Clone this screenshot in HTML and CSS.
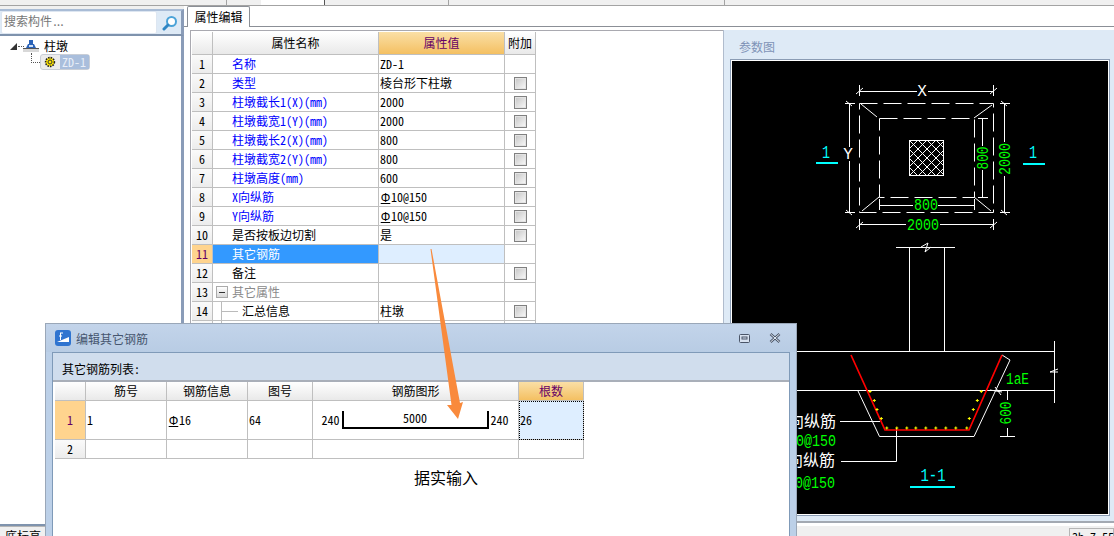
FILE: index.html
```html
<!DOCTYPE html>
<html lang="zh-CN">
<head>
<meta charset="utf-8">
<title>编辑其它钢筋</title>
<link rel="stylesheet" href="styles.css">
</head>
<body>
<div class="page">
  <div class="topstrip"><i class="seg s1"></i><i class="seg s2"></i><i class="seg s3"></i><i class="seg s4"></i><i class="seg s5"></i></div>
  <div class="main">
    <aside class="left">
      <div class="searchbar">
        <div class="searchbox">搜索构件<span class="dots">...</span></div>
        <svg class="searchicon" width="16" height="16" viewBox="0 0 16 16"><circle cx="9.5" cy="6.5" r="4.5" fill="#fff" stroke="#4ba3d8" stroke-width="2"/><path d="M6 10 L2 14" stroke="#2f86c4" stroke-width="3" stroke-linecap="round"/></svg>
      </div>
      <div class="tree">
        <div class="node root">
          <svg class="twist" width="7" height="7" viewBox="0 0 7 7"><path d="M0 7 L7 7 L7 0 Z" fill="#333"/></svg>
          <i class="hdots"></i>
          <svg class="colicon" width="16" height="13" viewBox="0 0 16 13"><rect x="6" y="0" width="4" height="4" fill="#2a62b8"/><path d="M3 8 L5 4 H11 L13 8 Z" fill="#2a62b8"/><rect x="6" y="5" width="4" height="2" fill="#cfe0f5"/><rect x="0" y="8" width="16" height="1" fill="#555"/><rect x="0" y="9" width="16" height="3" fill="#d8d8d8"/></svg>
          <span>柱墩</span>
        </div>
        <div class="node leaf">
          <i class="elbow"></i>
          <div class="chip">
            <svg class="gear" width="12" height="12" viewBox="0 0 12 12"><circle cx="6" cy="6" r="4.4" fill="#ffe600" stroke="#222" stroke-width="1.6" stroke-dasharray="1.6 1"/><circle cx="6" cy="6" r="2" fill="#ffe600" stroke="#333" stroke-width="1"/></svg>
            <span class="chiplabel">ZD-1</span>
          </div>
        </div>
      </div>
    </aside>
    <section class="right">
      <div class="tabs"><div class="tab">属性编辑</div></div>
      <div class="rightbody">
        <div class="props">
          <table class="grid proptable">
            <colgroup><col class="c1"><col class="c2"><col class="c3"><col class="c4"></colgroup>
            <thead><tr class="headrow"><th></th><th>属性名称</th><th class="hot">属性值</th><th>附加</th></tr></thead>
            <tbody>
              <tr><td class="rh">1</td><td class="nm blue">名称</td><td class="val">ZD-1</td><td></td></tr>
              <tr><td class="rh">2</td><td class="nm blue">类型</td><td class="val">棱台形下柱墩</td><td class="ck"><i class="box"></i></td></tr>
              <tr><td class="rh">3</td><td class="nm blue">柱墩截长1(X)(mm)</td><td class="val">2000</td><td class="ck"><i class="box"></i></td></tr>
              <tr><td class="rh">4</td><td class="nm blue">柱墩截宽1(Y)(mm)</td><td class="val">2000</td><td class="ck"><i class="box"></i></td></tr>
              <tr><td class="rh">5</td><td class="nm blue">柱墩截长2(X)(mm)</td><td class="val">800</td><td class="ck"><i class="box"></i></td></tr>
              <tr><td class="rh">6</td><td class="nm blue">柱墩截宽2(Y)(mm)</td><td class="val">800</td><td class="ck"><i class="box"></i></td></tr>
              <tr><td class="rh">7</td><td class="nm blue">柱墩高度(mm)</td><td class="val">600</td><td class="ck"><i class="box"></i></td></tr>
              <tr><td class="rh">8</td><td class="nm blue">X向纵筋</td><td class="val"><span class="bar">Φ</span>10@150</td><td class="ck"><i class="box"></i></td></tr>
              <tr><td class="rh">9</td><td class="nm blue">Y向纵筋</td><td class="val"><span class="bar">Φ</span>10@150</td><td class="ck"><i class="box"></i></td></tr>
              <tr><td class="rh">10</td><td class="nm">是否按板边切割</td><td class="val">是</td><td class="ck"><i class="box"></i></td></tr>
              <tr class="sel"><td class="rh">11</td><td class="nm">其它钢筋</td><td class="val"></td><td></td></tr>
              <tr><td class="rh">12</td><td class="nm">备注</td><td class="val"></td><td class="ck"><i class="box"></i></td></tr>
              <tr><td class="rh">13</td><td class="nm group"><i class="minus"></i>其它属性</td><td class="val"></td><td></td></tr>
              <tr><td class="rh">14</td><td class="nm sub"><i class="branch"></i>汇总信息</td><td class="val">柱墩</td><td class="ck"><i class="box"></i></td></tr>
              <tr><td class="rh">15</td><td class="nm sub"></td><td class="val"></td><td></td></tr>
            </tbody>
          </table>
        </div>
        <div class="params">
          <div class="paramtitle">参数图</div>
          <div class="canvasframe">
            <svg class="drawing" width="376" height="453" viewBox="732 61 376 453">
              <defs>
                <pattern id="hatch" width="9" height="9" patternUnits="userSpaceOnUse" patternTransform="translate(909 140)">
                  <path d="M0 0 L9 9 M9 0 L0 9" stroke="#fff" stroke-width="1"/>
                </pattern>
              </defs>
              <g class="w">
                <path class="dash" d="M859.5 103.5 H993.5 V212.5 H859.5 Z"/>
                <path class="dash" d="M879.5 118.5 H974.5 V197.5 H879.5 Z"/>
                <path d="M861 104 L877 117 M992 105 L974 118 M862 211 L879 197 M974 197 L991 211"/>
                <rect x="909.5" y="140.5" width="34" height="35" fill="url(#hatch)"/>
                <path d="M859.5 91.5 H917 M928 91.5 H993.5 M859.5 85 V96 M993.5 85 V96 M856 94 L863 88 M990 94 L997 88"/>
                <path d="M849.5 103.5 V147 M849.5 161 V212.5 M845 103.5 H855 M845 212.5 H855 M846 101 L852 106 M846 210 L852 215"/>
                <path d="M1004.5 103.5 V142 M1004.5 176 V212.5 M1000 103.5 H1010 M1000 212.5 H1010 M1001 101 L1007 106 M1001 210 L1007 215"/>
                <path d="M982.5 118.5 V146 M982.5 170 V197.5 M978 118.5 H988 M978 197.5 H988"/>
                <path d="M879.5 205.5 H913 M938 205.5 H974.5 M879.5 199 V210 M974.5 199 V210"/>
                <path d="M859.5 224.5 H906 M940 224.5 H993.5 M859.5 219 V230 M993.5 219 V230 M856 228 L863 222 M990 228 L997 222"/>
                <path d="M896 247.5 H955 M921 247 L928 243 L925 252 L931 247"/>
                <path d="M909.5 247 V351 M944.5 247 V351"/>
                <path d="M732 351.5 H1054.5 M732 390.5 H1054.5 M1054.5 341 V403 M1050 372 L1058 369 M1050 372 H1058"/>
                <path d="M858 391 L879.5 436.5 H974 L1010 360 L1002 355"/>
                <path d="M1000 436.5 H1015 M1007.5 390 V400 M1007.5 428 V436"/>
                <path d="M990 390 L1002 392 M995 387 L1001 395"/>
                <path d="M840 421.5 H880 M841 461.5 H896.5 V428"/>
              </g>
              <path class="red" d="M851 355 L885 430 H969 L1002 355"/>
              <g class="yel">
                <path d="M885.3 428h3M886.8 426.5v3M895.3 428h3M896.8 426.5v3M905.3 428h3M906.8 426.5v3M914.3 428h3M915.8 426.5v3M924.3 428h3M925.8 426.5v3M934.3 428h3M935.8 426.5v3M944.3 428h3M945.8 426.5v3M954.3 428h3M955.8 426.5v3M965.3 428h3M966.8 426.5v3"/>
                <path d="M868.5 391.5h3M870 390v3M872.8 400.5h3M874.3 399v3M875.5 409.5h3M877 408v3M879.8 418.5h3M881.3 417v3"/>
                <path d="M979.8 391.5h3M981.3 390v3M975.8 400.5h3M977.3 399v3M971.8 409.5h3M973.3 408v3M967.8 418.5h3M969.3 417v3"/>
              </g>
              <g class="cy">
                <rect x="816" y="162" width="22" height="2"/>
                <rect x="1023" y="163" width="22" height="2"/>
                <rect x="910" y="486" width="45" height="2"/>
              </g>
              <text class="t cyan big" x="826" y="158" text-anchor="middle" textLength="8" lengthAdjust="spacingAndGlyphs">1</text>
              <text class="t cyan big" x="1033" y="158" text-anchor="middle" textLength="8" lengthAdjust="spacingAndGlyphs">1</text>
              <text class="t cyan big" x="933" y="481" text-anchor="middle" textLength="25" lengthAdjust="spacingAndGlyphs">1-1</text>
              <text class="t white" x="922" y="96" text-anchor="middle">X</text>
              <text class="t white" x="848" y="159" text-anchor="middle">Y</text>
              <text class="t green" x="923" y="230" text-anchor="middle" textLength="32" lengthAdjust="spacingAndGlyphs">2000</text>
              <text class="t green" x="926" y="210" text-anchor="middle" textLength="24" lengthAdjust="spacingAndGlyphs">800</text>
              <text class="t green" transform="translate(1010 159) rotate(-90)" text-anchor="middle" textLength="32" lengthAdjust="spacingAndGlyphs">2000</text>
              <text class="t green" transform="translate(988 158) rotate(-90)" text-anchor="middle" textLength="23" lengthAdjust="spacingAndGlyphs">800</text>
              <text class="t green" transform="translate(1011 413) rotate(-90)" text-anchor="middle" textLength="23" lengthAdjust="spacingAndGlyphs">600</text>
              <text class="t green" x="1006" y="384" textLength="23" lengthAdjust="spacingAndGlyphs">1aE</text>
              <text class="t white cjk" x="836" y="427" text-anchor="end">X向纵筋</text>
              <text class="t green" x="836" y="446" text-anchor="end" textLength="56" lengthAdjust="spacingAndGlyphs">C10@150</text>
              <text class="t white cjk" x="835" y="466" text-anchor="end">Y向纵筋</text>
              <text class="t green" x="835" y="488" text-anchor="end" textLength="56" lengthAdjust="spacingAndGlyphs">C10@150</text>
            </svg>
          </div>
        </div>
      </div>
    </section>
  </div>
  <footer class="status">
    <div class="stleft">底标高</div>
    <div class="stmid"></div>
    <div class="stright">3h 7.55</div>
  </footer>

  <div class="dialog">
    <div class="dlgtitle">
      <svg class="dlgicon" width="16" height="16" viewBox="0 0 16 16"><rect width="16" height="16" rx="3" fill="#2f74d0"/><path d="M2 12 L14 7 V12 Z" fill="#fff"/><path d="M5 3 H8 M5.500 3 V10 M4 6 H7" stroke="#fff" stroke-width="1" fill="none"/></svg>
      <span class="dlgname">编辑其它钢筋</span>
      <svg class="winbtn max" width="11" height="9" viewBox="0 0 11 9"><rect x=".5" y=".5" width="10" height="8" rx="1" fill="#d8e2f0" stroke="#4a5568"/><rect x="3" y="3" width="5" height="2" fill="none" stroke="#4a5568"/></svg>
      <svg class="winbtn close" width="12" height="10" viewBox="0 0 12 10"><path d="M1.500 1 L10.500 9 M10.500 1 L1.500 9" stroke="#4a5568" stroke-width="2.600"/><path d="M1.500 1 L10.500 9 M10.500 1 L1.500 9" stroke="#e6edf6" stroke-width="1"/></svg>
    </div>
    <div class="dlgpanel">
      <div class="dlglabel">其它钢筋列表:</div>
      <div class="dlgbody">
        <table class="grid rebartable">
          <colgroup><col class="d1"><col class="d2"><col class="d3"><col class="d4"><col class="d5"><col class="d6"></colgroup>
          <thead><tr class="drow"><th></th><th>筋号</th><th>钢筋信息</th><th>图号</th><th>钢筋图形</th><th class="hot">根数</th></tr></thead>
          <tbody>
            <tr class="tall">
              <td class="rh active">1</td><td class="val">1</td><td class="val"><span class="bar">Φ</span>16</td><td class="val">64</td>
              <td class="shape">
                <div class="shapewrap">
                  <span>240</span>
                  <div class="hook"><span>5000</span></div>
                  <span>240</span>
                </div>
              </td>
              <td class="val count">26</td>
            </tr>
            <tr class="drow"><td class="rh">2</td><td></td><td></td><td></td><td></td><td></td></tr>
          </tbody>
        </table>
        <p class="note">据实输入</p>
      </div>
    </div>
  </div>

  <svg class="arrow" width="45" height="180" viewBox="425 245 45 180"><path d="M430.500 249 L431.500 249 L460 403 L463 402 L458 419 L447 405 L451.500 405 Z" fill="#f98a3c"/></svg>
</div>
</body>
</html>
```
FILE: styles.css
```css
* { box-sizing: border-box; }
html, body { margin: 0; padding: 0; }
body { background: #fff; }
.page {
  position: relative; width: 1114px; height: 536px; overflow: hidden;
  font: 12px/1 "Noto Sans Mono CJK SC", "Noto Sans CJK SC", "Liberation Mono", monospace;
  color: #000; background: #fff;
}
.topstrip { height: 6px; background: #f0f0f0; border-bottom: 1px solid #a3a3a3; display: flex; }
.seg { display: block; height: 5px; border-right: 1px solid #a3a3a3; }
.s1 { width: 227px; }
.s2 { width: 34px; border-right: 0; }
.s3 { width: 64px; background: #fff; border-right: 1px solid #555; }
.s4 { width: 124px; }
.s5 { width: 276px; }

.main { display: flex; height: 520px; }
.left { width: 184px; flex: none; padding-top: 3px; background: #f0f0f0; display: flex; flex-direction: column; }
.searchbar {
  height: 27px; display: flex; align-items: center; gap: 6px;
  background: #deeaf6; border-top: 2px solid #a9bcd6; border-bottom: 2px solid #7f93ad;
  border-right: 3px solid #8a9cb8; padding-left: 1px;
}
.searchbox {
  width: 156px; height: 23px; background: #fff; border: 1px solid #dde6f1; border-radius: 2px;
  color: #777; font-size: 12px; line-height: 18px; padding-left: 2px;
}
.dots { letter-spacing: -2.500px; }
.searchicon { flex: none; margin-left: -1px; }
.tree {
  flex: 1; background: #fff; border-right: 3px solid #8a9cb8; border-bottom: 2px solid #7f93ad;
  padding-top: 2px;
}
.node { display: flex; align-items: center; position: relative; }
.root { height: 16px; padding-left: 10px; }
.twist { flex: none; }
.hdots { width: 6px; border-top: 1px dotted #555; margin: 0 0 0 1px; }
.colicon { flex: none; margin-left: -1px; }
.root span { margin-left: 5px; font-size: 12px; }
.leaf { height: 16px; padding-left: 31px; }
.elbow { width: 9px; height: 10px; border-left: 1px dotted #555; border-bottom: 1px dotted #555; margin-top: -9px; }
.chip {
  width: 50px; height: 16px; display: flex; align-items: center; border: 1px solid #c9ced6; border-radius: 3px;
  background: #ececec; padding-left: 3px;
}
.gear { flex: none; }
.chiplabel {
  margin-left: 4px; flex: 1; height: 14px; background: #a9bedc; color: #e8eef8; line-height: 14px; padding-left: 2px;
}

.right { flex: 1; min-width: 0; display: flex; flex-direction: column; background: #fff; }
.tabs { height: 21px; padding-left: 3px; border-bottom: 1px solid #8b8f96; }
.tab {
  width: 63px; height: 21px; background: #fff; border: 1px solid #8b8f96; border-bottom: 0;
  text-align: center; line-height: 19px; font-size: 12px; border-radius: 2px 2px 0 0;
}
.rightbody { flex: 1; display: flex; margin-top: 3px; min-height: 0; }
.props {
  width: 533px; flex: none; margin-left: 6px; border-top: 1px solid #a9a9b0; border-left: 1px solid #a9a9b0; padding: 1px 0 0 1px;
  overflow: hidden;
}
.grid { border-collapse: separate; border-spacing: 0; table-layout: fixed; }
.grid th, .grid td {
  padding: 0; border-right: 2px solid #bfbfbf; border-bottom: 2px solid #bfbfbf; border-width: 0 1px 1px 0;
  font-weight: 400; font-size: 12px; overflow: hidden; white-space: nowrap;
}
.grid th { background: linear-gradient(#fff, #e9e9e9); text-align: center; }
.grid th.hot { background: linear-gradient(#fadfa6, #f4c062); color: #660066; }
.proptable { width: 344px; }
.c1 { width: 21px; } .c2 { width: 166px; } .c3 { width: 126px; } .c4 { width: 31px; }
.headrow th { height: 23px; }
.proptable td { height: 19px; }
.rh { text-align: center; background: linear-gradient(#fafafa, #ececec); }
.nm { padding-left: 19px !important; position: relative; }
.blue { color: #0000ff; }
.val { padding-left: 1px !important; }
.bar {
  display: inline-block; width: 11px; text-align: center; font-family: "Liberation Sans", sans-serif;
  font-size: 12px; text-decoration: underline;
}
.ck { text-align: center; line-height: 0; }
.box {
  display: inline-block; width: 13px; height: 13px; border: 1px solid #808080;
  background: linear-gradient(135deg, #c4c4c4, #fbfbfb); box-shadow: inset 0 0 0 1px #e4e4e4; vertical-align: middle;
}
.sel .rh { background: #ffd48e; color: #660066; }
.sel .nm { background: #3399ff; color: #fff; }
.sel .val { background: #deeeff; }
.group { color: #8a8a8a; }
.minus {
  position: absolute; left: 3px; top: 3px; width: 12px; height: 12px; border: 1px solid #aaa;
  background: linear-gradient(#333, #333) center / 6px 1px no-repeat, linear-gradient(#fff, #d8d8d8);
}
.sub {
  padding-left: 29px !important;
  background: linear-gradient(#bbb, #bbb) 8px 0 / 1px 100% no-repeat;
}
.branch { position: absolute; left: 9px; top: 9px; width: 16px; height: 1px; background: #bbb; }

.params {
  flex: 1; margin-bottom: 3px; background: #deeaf6; border-left: 1px solid #b0bccd; border-bottom: 2px solid #a3a9b2;
  padding: 0 4px 0 6px;
}
.paramtitle { height: 29px; padding: 11px 0 0 9px; color: #7f93b6; font-size: 12px; }
.canvasframe { width: 380px; height: 457px; border: 1px solid #8a9cb4; background: #fff; padding: 1px; }
.drawing { display: block; background: #000; }
.w path, .w rect { fill: none; stroke: #fff; stroke-width: 1; }
.w rect { fill: url(#hatch); }
.w .dash { stroke-dasharray: 18 6; }
.red { fill: none; stroke: #ff0000; stroke-width: 1.700; }
.yel path { stroke: #ffff00; stroke-width: 1; fill: none; }
.cy rect { fill: #00ffff; }
.t { font-family: "Liberation Mono", monospace; font-size: 16px; }
.big { font-size: 18px; }
.white { fill: #fff; }
.green { fill: #00ff00; }
.cyan { fill: #00ffff; }
.cjk { font-family: "Noto Sans CJK SC", sans-serif; font-size: 16px; }

.status { display: flex; height: 10px; overflow: hidden; background: #f0f0f0; font-size: 12px; }
.stleft { width: 45px; padding: 3px 0 0 5px; border-top: 1px solid #b5b5b5; white-space: nowrap; }
.stmid { flex: 1; }
.stright { width: 45px; padding: 2px 0 0 2px; border: 1px solid #b5b5b5; border-bottom: 0; margin-top: 2px; white-space: nowrap; }

.dialog {
  position: absolute; left: 45px; top: 323px; width: 752px; height: 240px;
  background: #bcd0e8; border: 1px solid #9aa7b8; padding: 0 6px;
}
.dlgtitle {
  height: 28px; margin: 0 -6px; padding: 0 0 0 9px; display: flex; align-items: center;
  background: linear-gradient(#c3d4ea, #b8cce4);
}
.dlgname { margin-left: 5px; color: #46566f; font-size: 12px; flex: 1; padding-top: 2px; }
.winbtn { flex: none; }
.max { margin-right: 19px; }
.close { margin-right: 15px; }
.dlgpanel { height: 220px; background: #d0dded; border: 1px solid #7f9ab8; border-bottom: 0; }
.dlglabel { height: 27px; padding: 10px 0 0 9px; font-size: 12px; }
.dlgbody { height: 190px; background: #fff; border-top: 2px solid #a9afb9; padding-left: 2px; }
.rebartable { width: 529px; }
.d1 { width: 31px; } .d2 { width: 81px; } .d3 { width: 81px; } .d4 { width: 65px; } .d5 { width: 206px; } .d6 { width: 65px; }
.drow th, .drow td { height: 19px; }
.tall td { height: 39px; }
.rh.active { background: #ffd48e; color: #660066; }
.count { background: #deeeff; outline: 1px dotted #000; outline-offset: -1px; padding-left: 1px !important; }
.shapewrap { display: flex; align-items: center; justify-content: center; padding-right: 1px; }
.hook {
  width: 147px; height: 18px; margin: 0 2px; border: solid #000; border-width: 0 2px 2px 2px;
  text-align: center; line-height: 14px;
}
.note { margin: 10px 0 0 359px; font-size: 16px; line-height: 16px; width: 70px; }
.arrow { position: absolute; left: 425px; top: 245px; }
```
